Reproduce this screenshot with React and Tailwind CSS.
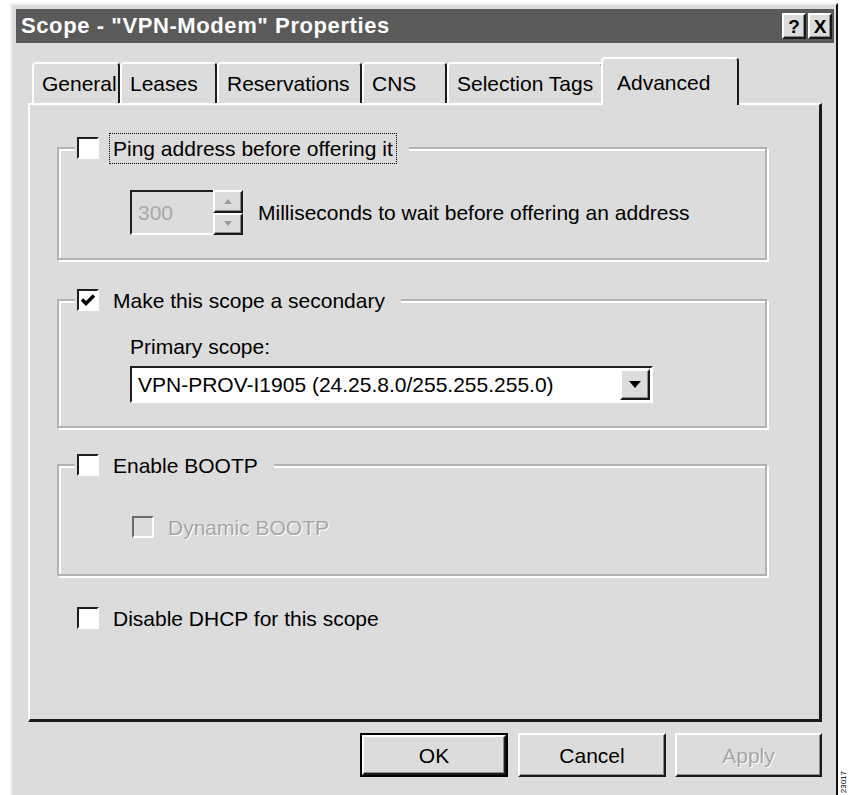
import React from 'react';

// raised 3d edge used by push buttons and spinner/dropdown parts
const raised = "border-t-2 border-l-2 border-t-white border-l-white border-b-2 border-r-2 border-b-[#1a1a1a] border-r-[#1a1a1a] shadow-[inset_-1px_-1px_0_#8a8a8a]";
// sunken edge for edit fields and check boxes
const sunken = "border-t-2 border-l-2 border-t-[#1f1f1f] border-l-[#1f1f1f] border-b-2 border-r-2 border-b-white border-r-white";

const Check = ({ checked, disabled }) => (
    <span className={`inline-flex w-[22px] h-[22px] shrink-0 items-center justify-center ${sunken} ${disabled ? 'bg-[#dcdcdc] border-t-[#6a6a6a] border-l-[#6a6a6a]' : 'bg-white'}`}>
        {checked && (
            <svg width="16" height="16" viewBox="0 0 16 16">
                <polyline points="2,7.5 6,11.5 14,3.5" fill="none" stroke="#000" strokeWidth="3.5" />
            </svg>
        )}
    </span>
);

const Option = ({ checked, disabled, focus, children }) => (
    <div className="flex items-center h-[32px]">
        <Check checked={checked} disabled={disabled} />
        <span
            className={`ml-[10px] px-[3px] h-[31px] flex items-center border ${focus ? 'border-dotted border-black' : 'border-transparent'} ${disabled ? 'text-[#a6a6a6] [text-shadow:1px_1px_0_#fff]' : ''}`}
        >
            {children}
        </span>
    </div>
);

const Group = ({ legend, className, children }) => (
    <fieldset className={`w-[710px] border-2 border-[#b2b2b2] shadow-[inset_2px_2px_0_#fff,2px_2px_0_#fff] ${className}`}>
        <legend className="ml-[16px] pl-[2px] pr-[12px] bg-[#dcdcdc]">
            {legend}
        </legend>
        <div className="pl-[71px]">{children}</div>
    </fieldset>
);

const Tab = ({ active, width, children }) => (
    <div
        className={`${width} flex items-center pl-[8px] border-t-2 border-l-2 border-t-white border-l-white border-r-2 border-r-[#1a1a1a] rounded-t-[4px] bg-[#dcdcdc] ${active ? 'h-[48px] -mb-[2px] -mx-[2px] pl-[14px] relative z-10' : 'h-[41px]'}`}
    >
        {children}
    </div>
);

const Arrow = ({ up, color }) => (
    <svg width="8" height="5" viewBox="0 0 8 5">
        <polygon points={up ? "0,5 8,5 4,0" : "0,0 8,0 4,5"} fill={color} />
    </svg>
);

export default function App() {
    return (
        <div className="w-[849px] h-[795px] bg-white flex overflow-hidden font-['Liberation_Sans',Arial,sans-serif] text-[21px] text-black leading-none">
            <div className="ml-[10px] mt-[3px] w-[828px] h-[800px] shrink-0 bg-[#dcdcdc] border-t-2 border-l-2 border-t-[#f2f2f2] border-l-[#f2f2f2] border-r-2 border-r-[#111] pt-[4px] pl-[4px] pr-[2px] flex flex-col">
                {/* caption */}
                <div className="h-[34px] bg-[#5a5a5a] flex items-center pl-[5px] pr-[2px]">
                    <span className="text-white font-bold text-[22px] tracking-[0.6px]">{'Scope - "VPN-Modem" Properties'}</span>
                    <div className="ml-auto flex gap-[2px]">
                        <div className={`w-[24px] h-[26px] bg-[#dcdcdc] flex items-center justify-center font-bold text-[19px] ${raised}`}>?</div>
                        <div className={`w-[24px] h-[26px] bg-[#dcdcdc] flex items-center justify-center font-bold text-[19px] ${raised}`}>X</div>
                    </div>
                </div>

                <div className="mt-[14px] mx-[12px]">
                    <div className="flex items-end pl-[4px] h-[46px]">
                        <Tab width="w-[88px]">General</Tab>
                        <Tab width="w-[97px]">Leases</Tab>
                        <Tab width="w-[145px]">Reservations</Tab>
                        <Tab width="w-[85px]">CNS</Tab>
                        <Tab width="w-[156px]">Selection Tags</Tab>
                        <Tab active width="w-[138px]">Advanced</Tab>
                    </div>

                    <div className="h-[619px] border-t-2 border-l-2 border-t-white border-l-white border-b-[3px] border-r-[3px] border-b-[#1a1a1a] border-r-[#1a1a1a] pt-[27px] pl-[27px]">
                        <Group legend={<Option focus>Ping address before offering it</Option>}>
                            <div className="pt-[26px] pb-[23px] flex items-center">
                                <div className="flex h-[45px]">
                                    <div className={`w-[83px] flex items-center pl-[6px] text-[#a9a9a9] border-t-2 border-l-2 border-t-[#1f1f1f] border-l-[#1f1f1f] border-b-2 border-b-white`}>300</div>
                                    <div className="w-[30px] flex flex-col">
                                        <div className={`flex-1 flex items-center justify-center bg-[#dcdcdc] ${raised}`}>
                                            <Arrow up color="#9c9c9c" />
                                        </div>
                                        <div className={`flex-1 flex items-center justify-center bg-[#dcdcdc] ${raised}`}>
                                            <Arrow color="#9c9c9c" />
                                        </div>
                                    </div>
                                </div>
                                <span className="ml-[15px]">Milliseconds to wait before offering an address</span>
                            </div>
                        </Group>

                        <Group className="mt-[24px]" legend={<Option checked>Make this scope a secondary</Option>}>
                            <div className="pt-[18px] pb-[23px]">
                                <div className="h-[24px] flex items-center">Primary scope:</div>
                                <div className={`mt-[8px] w-[523px] h-[37px] bg-white flex items-center pl-[6px] ${sunken}`}>
                                    <span>VPN-PROV-I1905 (24.25.8.0/255.255.255.0)</span>
                                    <div className={`ml-auto mr-[1px] w-[30px] h-[31px] bg-[#dcdcdc] flex items-center justify-center ${raised}`}>
                                        <svg width="12" height="7" viewBox="0 0 12 7">
                                            <polygon points="0,0 12,0 6,7" fill="#000" />
                                        </svg>
                                    </div>
                                </div>
                            </div>
                        </Group>

                        <Group className="mt-[21px]" legend={<Option>Enable BOOTP</Option>}>
                            <div className="pt-[30px] pb-[31px] pl-[2px]">
                                <Option disabled>Dynamic BOOTP</Option>
                            </div>
                        </Group>

                        <div className="mt-[26px] ml-[20px]">
                            <Option>Disable DHCP for this scope</Option>
                        </div>
                    </div>

                    <div className="mt-[11px] flex justify-end">
                        <div className="w-[148px] h-[44px] border-2 border-black">
                            <div className={`h-full flex items-center justify-center ${raised}`}>OK</div>
                        </div>
                        <div className={`ml-[10px] w-[148px] h-[44px] flex items-center justify-center ${raised}`}>Cancel</div>
                        <div className={`ml-[9px] w-[147px] h-[44px] flex items-center justify-center text-[#a6a6a6] [text-shadow:1px_1px_0_#fff] ${raised}`}>Apply</div>
                    </div>
                </div>
            </div>

            <div className="flex-1 flex items-end justify-center pb-[2px]">
                <span className="[writing-mode:vertical-rl] rotate-180 text-[8px] leading-none">23017</span>
            </div>
        </div>
    );
}
